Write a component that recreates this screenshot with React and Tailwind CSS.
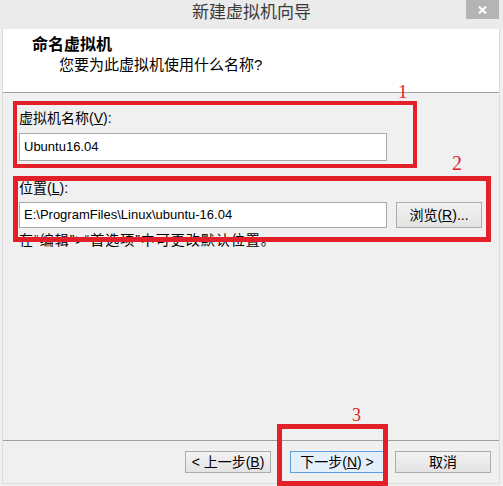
export default function App() {
  const font = { fontFamily: '"Liberation Sans", "Noto Sans CJK SC", sans-serif' };
  return (
    <div className="relative w-[503px] h-[486px] bg-[#f0f0f0] overflow-hidden flex flex-col text-[#000]" style={font}>
      {/* title bar */}
      <div className="h-[29px] bg-[#ebebeb] grid grid-cols-[1fr_auto_1fr] shrink-0">
        <div />
        <div className="text-[17px] leading-[26px] text-[#3a3a3a]">新建虚拟机向导</div>
        <div className="flex justify-end pr-[4px]">
          <div className="w-[33px] h-[19px] bg-[#b4b4b4] flex items-center justify-center">
            <svg width="9" height="8" viewBox="0 0 9 8">
              <path d="M1 0.5 L8 7.5 M8 0.5 L1 7.5" stroke="#fff" strokeWidth="2" />
            </svg>
          </div>
        </div>
      </div>

      {/* window body */}
      <div className="flex-1 flex flex-col ml-[2px] w-[498px] border-x border-b border-[#dcdcdc] mb-[2px]">
        {/* header */}
        <div className="h-[64px] bg-white border-b border-[#a0a0a0] pl-[29px] pt-[6px] shrink-0">
          <div className="text-[16px] leading-[20px] font-bold">命名虚拟机</div>
          <div className="text-[15px] leading-[20px] pl-[27px]">您要为此虚拟机使用什么名称?</div>
        </div>

        {/* content */}
        <div className="flex-1 pl-[16px] pt-[15px] text-[14px] leading-[20px]">
          <div>
            虚拟机名称(<span className="underline">V</span>):
          </div>
          <div className="mt-[5px] w-[368px] h-[28px] bg-white border border-[#a9a9a9] pl-[4px] flex items-center text-[13px]">
            Ubuntu16.04
          </div>
          <div className="mt-[17px]">
            位置(<span className="underline">L</span>):
          </div>
          <div className="mt-[4px] flex">
            <div className="w-[368px] h-[26px] bg-white border border-[#a9a9a9] pl-[4px] flex items-center text-[13px]">
              E:\ProgramFiles\Linux\ubuntu-16.04
            </div>
            <div className="ml-[9px] w-[86px] h-[26px] border border-[#acacac] bg-gradient-to-b from-[#f2f2f2] to-[#e3e3e3] flex items-center justify-center text-[14px]">
              浏览(<span className="underline">R</span>)...
            </div>
          </div>
          <div className="mt-[2px] tracking-[1px]">在“编辑”&gt;“首选项”中可更改默认位置。</div>
        </div>

        {/* footer */}
        <div className="h-[43px] border-t border-[#a0a0a0] shrink-0 flex justify-end pr-[8px] pt-[10px] text-[14px]">
          <div className="w-[86px] h-[22px] border border-[#acacac] bg-gradient-to-b from-[#f2f2f2] to-[#e3e3e3] flex items-center justify-center">
            &lt; 上一步(<span className="underline">B</span>)
          </div>
          <div className="ml-[19px] w-[94px] h-[22px] border border-[#5a9fe0] bg-[#e3f0fc] flex items-center justify-center">
            下一步(<span className="underline">N</span>) &gt;
          </div>
          <div className="ml-[11px] w-[96px] h-[22px] border border-[#acacac] bg-gradient-to-b from-[#f2f2f2] to-[#e3e3e3] flex items-center justify-center">
            取消
          </div>
        </div>
      </div>

      {/* red annotation overlays */}
      <div className="absolute left-[13px] top-[101px] w-[404px] h-[67px] border-[4px] border-[#e3202a]" />
      <div className="absolute left-[13px] top-[176px] w-[478px] h-[66px] border-[5px] border-[#e3202a]" />
      <div className="absolute left-[277px] top-[424px] w-[111px] h-[62px] border-[5px] border-[#e3202a]" />
      <div className="absolute left-[398px] top-[80px] text-[19px] leading-[24px] text-[#e3202a]" style={{ fontFamily: '"Liberation Serif", serif' }}>1</div>
      <div className="absolute left-[452px] top-[151px] text-[20px] leading-[24px] text-[#e3202a]" style={{ fontFamily: '"Liberation Serif", serif' }}>2</div>
      <div className="absolute left-[352px] top-[404px] text-[18px] leading-[22px] text-[#e3202a]" style={{ fontFamily: '"Liberation Serif", serif' }}>3</div>
    </div>
  );
}
